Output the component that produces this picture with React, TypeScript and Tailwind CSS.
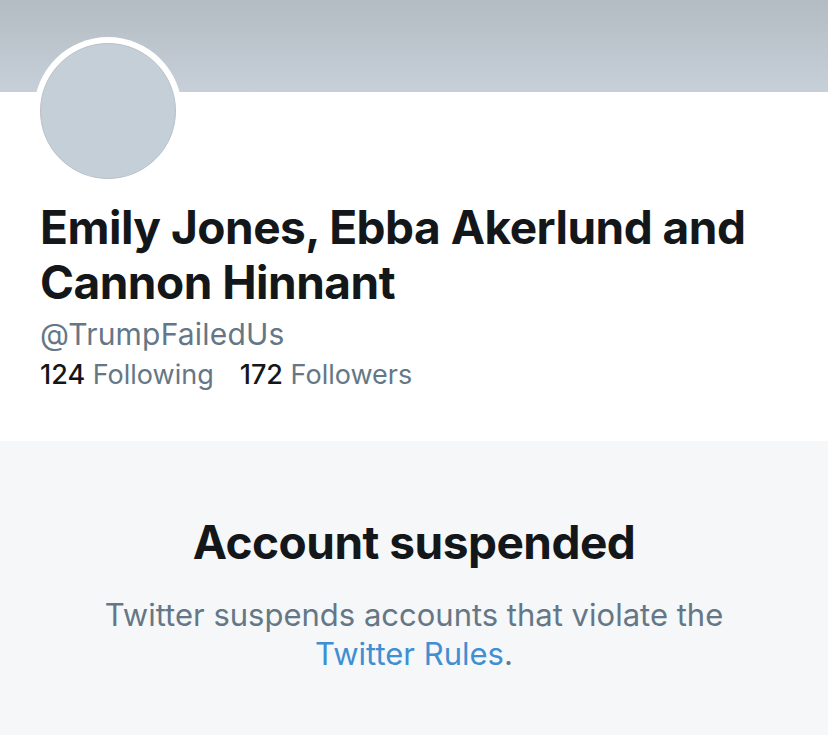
export default function App() {
  return (
    <div className="w-[828px] h-[735px] overflow-hidden bg-white font-['Inter',sans-serif]">
      <div className="h-[92px] bg-gradient-to-b from-[#b3bbc3] to-[#c7d0d8]" />

      <div className="relative h-[349px] px-10">
        <div className="absolute left-[34px] top-[-55px] w-[148px] h-[148px] rounded-full bg-white p-[6px]">
          <div className="w-full h-full rounded-full bg-[#c5cfd8] border border-[#b8c1ca]" />
        </div>

        <div className="pt-[108px]">
          <h1 className="text-[46px] leading-[55px] font-bold tracking-[-0.5px] text-[#14171a] whitespace-nowrap">
            Emily Jones, Ebba Akerlund and
            <br />
            Cannon Hinnant
          </h1>
          <div className="mt-[6px] text-[30px] leading-[36px] tracking-[0.2px] text-[#657786]">
            @TrumpFailedUs
          </div>
          <div className="mt-[7px] flex gap-[26px] text-[27px] leading-[32px]">
            <span>
              <span className="text-[#14171a] font-medium">124</span>{" "}
              <span className="text-[#657786]">Following</span>
            </span>
            <span>
              <span className="text-[#14171a] font-medium">172</span>{" "}
              <span className="text-[#657786]">Followers</span>
            </span>
          </div>
        </div>
      </div>

      <div className="h-[294px] bg-[#f5f7f9] flex flex-col items-center pt-[74px]">
        <h2 className="text-[46px] leading-[54px] font-bold tracking-[-0.5px] text-[#14171a]">
          Account suspended
        </h2>
        <p className="mt-[26px] text-center text-[31px] leading-[39px] text-[#657786]">
          Twitter suspends accounts that violate the
          <br />
          <span className="text-[#3f8fd2]">Twitter Rules</span>.
        </p>
      </div>
    </div>
  );
}
